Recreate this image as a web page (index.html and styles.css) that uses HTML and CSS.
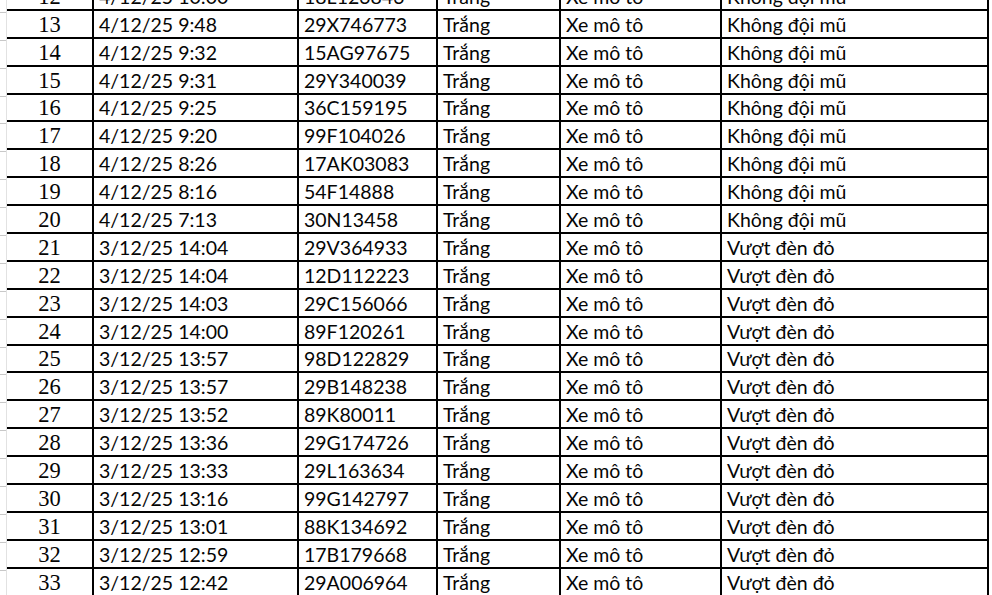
FILE: index.html
```html
<!DOCTYPE html>
<html lang="vi">
<head>
<meta charset="utf-8">
<title>Danh sách vi phạm</title>
<link rel="stylesheet" href="styles.css">
</head>
<body>
<div class="page">
  <div class="gutter">
    <div class="g"></div><div class="g"></div><div class="g"></div><div class="g"></div><div class="g"></div><div class="g"></div><div class="g"></div><div class="g"></div><div class="g"></div><div class="g"></div><div class="g"></div><div class="g"></div><div class="g"></div><div class="g"></div><div class="g"></div><div class="g"></div><div class="g"></div><div class="g"></div><div class="g"></div><div class="g"></div><div class="g"></div><div class="g"></div>
  </div>
  <div class="sheet">
    <div class="c n">12</div><div class="c">4/12/25 10:00</div><div class="c">18L123843</div><div class="c">Trắng</div><div class="c">Xe mô tô</div><div class="c">Không đội mũ</div>
    <div class="c n">13</div><div class="c">4/12/25 9:48</div><div class="c">29X746773</div><div class="c">Trắng</div><div class="c">Xe mô tô</div><div class="c">Không đội mũ</div>
    <div class="c n">14</div><div class="c">4/12/25 9:32</div><div class="c">15AG97675</div><div class="c">Trắng</div><div class="c">Xe mô tô</div><div class="c">Không đội mũ</div>
    <div class="c n">15</div><div class="c">4/12/25 9:31</div><div class="c">29Y340039</div><div class="c">Trắng</div><div class="c">Xe mô tô</div><div class="c">Không đội mũ</div>
    <div class="c n">16</div><div class="c">4/12/25 9:25</div><div class="c">36C159195</div><div class="c">Trắng</div><div class="c">Xe mô tô</div><div class="c">Không đội mũ</div>
    <div class="c n">17</div><div class="c">4/12/25 9:20</div><div class="c">99F104026</div><div class="c">Trắng</div><div class="c">Xe mô tô</div><div class="c">Không đội mũ</div>
    <div class="c n">18</div><div class="c">4/12/25 8:26</div><div class="c">17AK03083</div><div class="c">Trắng</div><div class="c">Xe mô tô</div><div class="c">Không đội mũ</div>
    <div class="c n">19</div><div class="c">4/12/25 8:16</div><div class="c">54F14888</div><div class="c">Trắng</div><div class="c">Xe mô tô</div><div class="c">Không đội mũ</div>
    <div class="c n">20</div><div class="c">4/12/25 7:13</div><div class="c">30N13458</div><div class="c">Trắng</div><div class="c">Xe mô tô</div><div class="c">Không đội mũ</div>
    <div class="c n">21</div><div class="c">3/12/25 14:04</div><div class="c">29V364933</div><div class="c">Trắng</div><div class="c">Xe mô tô</div><div class="c">Vượt đèn đỏ</div>
    <div class="c n">22</div><div class="c">3/12/25 14:04</div><div class="c">12D112223</div><div class="c">Trắng</div><div class="c">Xe mô tô</div><div class="c">Vượt đèn đỏ</div>
    <div class="c n">23</div><div class="c">3/12/25 14:03</div><div class="c">29C156066</div><div class="c">Trắng</div><div class="c">Xe mô tô</div><div class="c">Vượt đèn đỏ</div>
    <div class="c n">24</div><div class="c">3/12/25 14:00</div><div class="c">89F120261</div><div class="c">Trắng</div><div class="c">Xe mô tô</div><div class="c">Vượt đèn đỏ</div>
    <div class="c n">25</div><div class="c">3/12/25 13:57</div><div class="c">98D122829</div><div class="c">Trắng</div><div class="c">Xe mô tô</div><div class="c">Vượt đèn đỏ</div>
    <div class="c n">26</div><div class="c">3/12/25 13:57</div><div class="c">29B148238</div><div class="c">Trắng</div><div class="c">Xe mô tô</div><div class="c">Vượt đèn đỏ</div>
    <div class="c n">27</div><div class="c">3/12/25 13:52</div><div class="c">89K80011</div><div class="c">Trắng</div><div class="c">Xe mô tô</div><div class="c">Vượt đèn đỏ</div>
    <div class="c n">28</div><div class="c">3/12/25 13:36</div><div class="c">29G174726</div><div class="c">Trắng</div><div class="c">Xe mô tô</div><div class="c">Vượt đèn đỏ</div>
    <div class="c n">29</div><div class="c">3/12/25 13:33</div><div class="c">29L163634</div><div class="c">Trắng</div><div class="c">Xe mô tô</div><div class="c">Vượt đèn đỏ</div>
    <div class="c n">30</div><div class="c">3/12/25 13:16</div><div class="c">99G142797</div><div class="c">Trắng</div><div class="c">Xe mô tô</div><div class="c">Vượt đèn đỏ</div>
    <div class="c n">31</div><div class="c">3/12/25 13:01</div><div class="c">88K134692</div><div class="c">Trắng</div><div class="c">Xe mô tô</div><div class="c">Vượt đèn đỏ</div>
    <div class="c n">32</div><div class="c">3/12/25 12:59</div><div class="c">17B179668</div><div class="c">Trắng</div><div class="c">Xe mô tô</div><div class="c">Vượt đèn đỏ</div>
    <div class="c n">33</div><div class="c">3/12/25 12:42</div><div class="c">29A006964</div><div class="c">Trắng</div><div class="c">Xe mô tô</div><div class="c">Vượt đèn đỏ</div>
  </div>
</div>
</body>
</html>
```

FILE: styles.css
```css
html, body {
  margin: 0;
  padding: 0;
  background: #ffffff;
}
.page {
  display: flex;
  align-items: flex-start;
  height: 595px;
  overflow: hidden;
}
.gutter {
  width: 7px;
  flex: none;
  margin-top: -15px;
  display: grid;
  grid-auto-rows: 27.9px;
  border-right: 1px solid #e2e2e2;
  box-sizing: border-box;
}
.g {
  border-bottom: 1px solid #c8c8c8;
}
.sheet {
  flex: none;
  margin-top: -17px;
  display: grid;
  grid-template-columns: 87px 205px 139px 123px 161px 267px;
  grid-auto-rows: 27.9px;
  font-family: Lato, "Liberation Sans", sans-serif;
  font-size: 19.5px;
  color: #050505;
}
.c {
  box-sizing: border-box;
  border-right: 2px solid #000;
  border-bottom: 2px solid #000;
  display: flex;
  align-items: flex-end;
  padding: 0 0 1px 5px;
  line-height: 22px;
  white-space: nowrap;
  overflow: hidden;
}
.n {
  justify-content: center;
  padding-left: 0;
  font-family: "Liberation Serif", serif;
  font-size: 22.5px;
}
```
